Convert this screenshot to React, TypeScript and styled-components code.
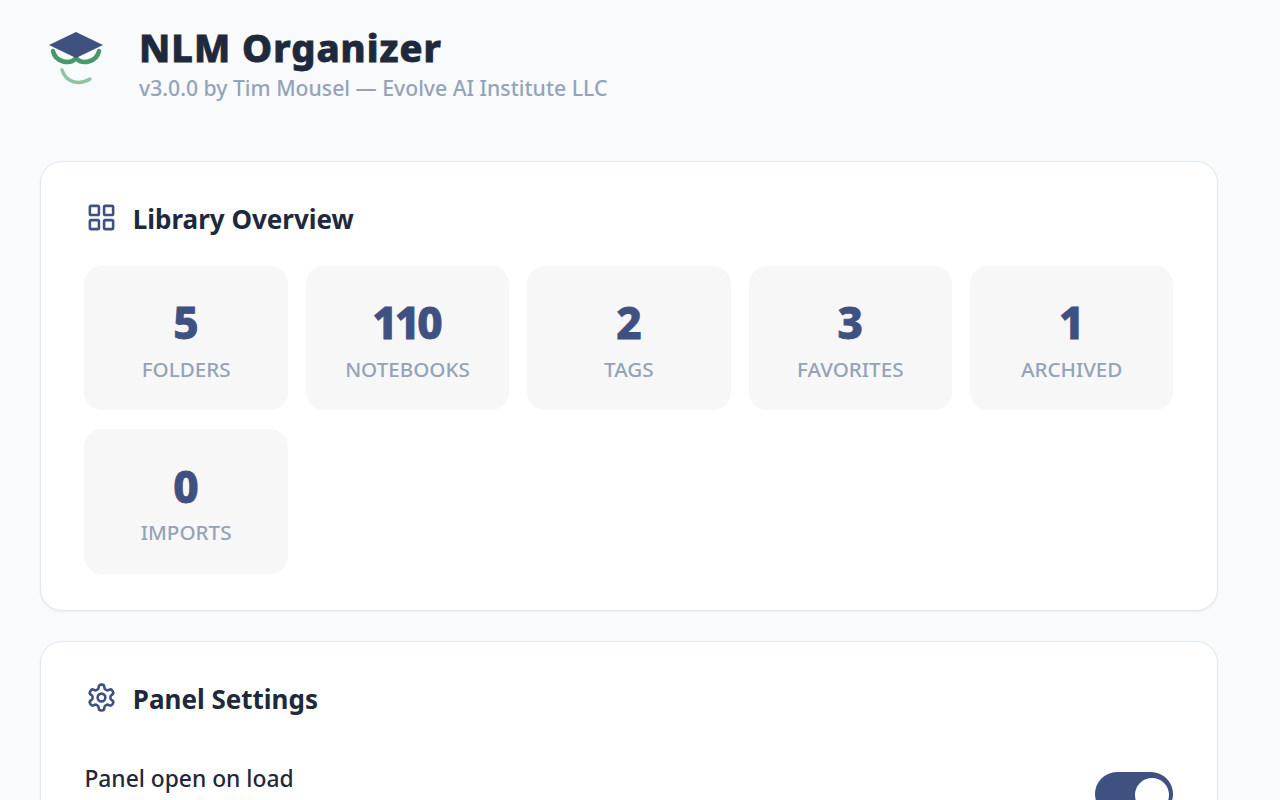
import React from "react";
import styled, { createGlobalStyle } from "styled-components";

const Global = createGlobalStyle`
  html, body { margin: 0; padding: 0; height: 100%; overflow: hidden; background: #f8fafc; }
  body { font-family: "Noto Sans", "Open Sans", "Liberation Sans", sans-serif; color: #1e293b; }
`;

const Page = styled.div`
  height: 800px;
  overflow: hidden;
  box-sizing: border-box;
  width: 1218px;
  padding: 0 0 0 40px;
`;

const Header = styled.header`
  display: flex;
  align-items: flex-start;
  gap: 27px;
  height: 161px;
  box-sizing: border-box;
  padding: 24px 0 0 0;
`;

const LogoMark = styled.svg`
  width: 72px;
  height: 72px;
  flex: none;
`;

const HeaderText = styled.div`
  display: flex;
  flex-direction: column;
`;

const Title = styled.h1`
  margin: 0;
  font-size: 38px;
  line-height: 47px;
  font-weight: 800;
  letter-spacing: 1px;
  -webkit-text-stroke: 0.8px #1e293b;
  color: #1e293b;
`;

const Subtitle = styled.div`
  font-size: 21.2px;
  line-height: 28px;
  font-weight: 500;
  color: #94a3b8;
  margin-top: 3px;
`;

const Card = styled.section`
  background: #fff;
  border: 1px solid #e2e8f0;
  border-radius: 22px;
  box-shadow: 0 1px 3px rgba(15, 23, 42, 0.05);
  box-sizing: border-box;
  padding: 36px 44px 36.2px 43.4px;
  margin-bottom: 30px;
`;

const CardHeading = styled.div`
  display: flex;
  align-items: center;
  gap: 16.2px;
  height: 42px;
  margin-bottom: 26px;
  color: #3f5180;
`;

const IconSlot = styled.span`
  display: flex;
  margin: -3px 0 0 1.2px;
`;

const HeadingText = styled.h2`
  margin: 0;
  font-size: 26px;
  line-height: 42px;
  font-weight: 700;
  color: #1e293b;
`;

const StatGrid = styled.div`
  display: grid;
  grid-template-columns: repeat(5, 203.4px);
  column-gap: 18px;
  row-gap: 19px;
`;

const StatTile = styled.div`
  height: 144.4px;
  background: #f7f7f8;
  border-radius: 18px;
  display: flex;
  flex-direction: column;
  align-items: center;
  box-sizing: border-box;
  padding-top: 26.4px;
`;

const StatValue = styled.div`
  font-size: 44px;
  line-height: 60px;
  font-weight: 800;
  letter-spacing: -3px;
  padding-right: 3px;
  -webkit-text-stroke: 0.8px #3f5180;
  color: #3f5180;
`;

const StatLabel = styled.div`
  font-size: 20.6px;
  line-height: 27px;
  font-weight: 500;
  color: #94a3b8;
  margin-top: 3.5px;
`;

const SettingRow = styled.div`
  display: flex;
  align-items: flex-start;
  justify-content: space-between;
  margin-top: 44.5px;
`;

const SettingLabel = styled.div`
  font-size: 22.8px;
  line-height: 30px;
  font-weight: 500;
  color: #1e293b;
`;

const Toggle = styled.div`
  position: relative;
  width: 78px;
  height: 44px;
  margin-top: 8px;
  border-radius: 22px;
  background: #3f5180;
`;

const Knob = styled.span`
  position: absolute;
  top: 6px;
  right: 4px;
  width: 34px;
  height: 34px;
  border-radius: 50%;
  background: #fff;
`;

const stats = [
  ["5", "FOLDERS"],
  ["110", "NOTEBOOKS"],
  ["2", "TAGS"],
  ["3", "FAVORITES"],
  ["1", "ARCHIVED"],
  ["0", "IMPORTS"],
];

const GridIcon = () => (
  <svg width="31" height="31" viewBox="0 0 24 24" fill="none" stroke="currentColor" strokeWidth="2" strokeLinecap="round" strokeLinejoin="round">
    <rect x="3" y="3" width="7" height="7" rx="1" />
    <rect x="14" y="3" width="7" height="7" rx="1" />
    <rect x="14" y="14" width="7" height="7" rx="1" />
    <rect x="3" y="14" width="7" height="7" rx="1" />
  </svg>
);

const GearIcon = () => (
  <svg width="31" height="31" viewBox="0 0 24 24" fill="none" stroke="currentColor" strokeWidth="2" strokeLinecap="round" strokeLinejoin="round">
    <path d="M12.22 2h-.44a2 2 0 0 0-2 2v.18a2 2 0 0 1-1 1.73l-.43.25a2 2 0 0 1-2 0l-.15-.08a2 2 0 0 0-2.73.73l-.22.38a2 2 0 0 0 .73 2.73l.15.1a2 2 0 0 1 1 1.72v.51a2 2 0 0 1-1 1.74l-.15.09a2 2 0 0 0-.73 2.73l.22.38a2 2 0 0 0 2.73.73l.15-.08a2 2 0 0 1 2 0l.43.25a2 2 0 0 1 1 1.73V20a2 2 0 0 0 2 2h.44a2 2 0 0 0 2-2v-.18a2 2 0 0 1 1-1.73l.43-.25a2 2 0 0 1 2 0l.15.08a2 2 0 0 0 2.73-.73l.22-.39a2 2 0 0 0-.73-2.73l-.15-.08a2 2 0 0 1-1-1.74v-.5a2 2 0 0 1 1-1.74l.15-.09a2 2 0 0 0 .73-2.73l-.22-.38a2 2 0 0 0-2.73-.73l-.15.08a2 2 0 0 1-2 0l-.43-.25a2 2 0 0 1-1-1.73V4a2 2 0 0 0-2-2z" />
    <circle cx="12" cy="12" r="3" />
  </svg>
);

const Logo = () => (
  <LogoMark viewBox="0 0 72 72">
    <path d="M13 27 C15 37 29 42 36 34 C43 42 57 37 59 27" fill="none" stroke="#479a68" strokeWidth="4.5" strokeLinecap="round" />
    <path d="M9 21 L36 8 L63 21 L36 34 Z" fill="#3f5180" />
    <path d="M22 46 C26 58 38 62 50 55" fill="none" stroke="#8cc4a6" strokeWidth="3.5" strokeLinecap="round" />
  </LogoMark>
);

export default function App() {
  return (
    <Page>
      <Global />
      <Header>
        <Logo />
        <HeaderText>
          <Title>NLM Organizer</Title>
          <Subtitle>v3.0.0 by Tim Mousel — Evolve AI Institute LLC</Subtitle>
        </HeaderText>
      </Header>
      <Card>
        <CardHeading>
          <IconSlot>
            <GridIcon />
          </IconSlot>
          <HeadingText>Library Overview</HeadingText>
        </CardHeading>
        <StatGrid>
          {stats.map(([value, label]) => (
            <StatTile key={label}>
              <StatValue>{value}</StatValue>
              <StatLabel>{label}</StatLabel>
            </StatTile>
          ))}
        </StatGrid>
      </Card>
      <Card>
        <CardHeading>
          <IconSlot>
            <GearIcon />
          </IconSlot>
          <HeadingText>Panel Settings</HeadingText>
        </CardHeading>
        <SettingRow>
          <SettingLabel>Panel open on load</SettingLabel>
          <Toggle>
            <Knob />
          </Toggle>
        </SettingRow>
      </Card>
    </Page>
  );
}
